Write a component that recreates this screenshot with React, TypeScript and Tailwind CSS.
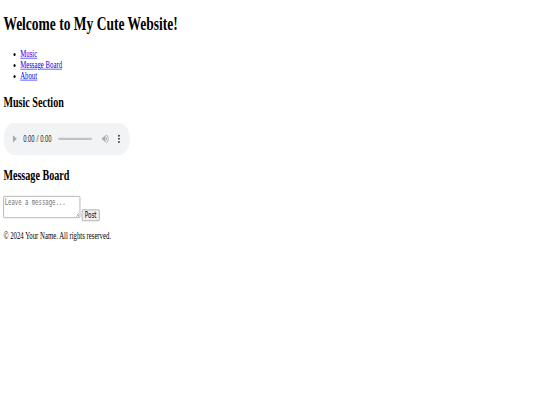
import React from "react";

export default function App() {
  return (
    <div className="w-[540px] h-[405px] overflow-hidden bg-white">
      <div className="w-[1280px] h-[665px] origin-top-left scale-x-[0.421875] scale-y-[0.609] px-[8px] pt-[21.44px] font-['Liberation_Serif',serif] text-[16px] leading-[normal] text-black">
        <header>
          <h1 className="text-[32px] font-bold mb-[21.44px]">Welcome to My Cute Website!</h1>
          <nav>
            <ul className="list-disc pl-[40px] my-[16px]">
              <li>
                <a href="#music" className="text-[#0000ee] underline">Music</a>
              </li>
              <li>
                <a href="#message-board" className="text-[#0000ee] underline">Message Board</a>
              </li>
              <li>
                <a href="#about" className="text-[#0000ee] underline">About</a>
              </li>
            </ul>
          </nav>
        </header>
        <section id="music">
          <h2 className="text-[24px] font-bold my-[19.92px]">Music Section</h2>
          <audio controls></audio>
        </section>
        <section id="message-board">
          <h2 className="text-[24px] font-bold my-[19.92px]">Message Board</h2>
          <div>
            <textarea
              rows={2}
              cols={20}
              placeholder="Leave a message..."
              className="font-['DejaVu_Sans_Mono',monospace] text-[13.333px] leading-[normal] border border-[#767676] rounded-[2px] p-[2px] placeholder:text-[#757575] resize"
            ></textarea>{" "}
            <button className="font-['DejaVu_Sans',sans-serif] text-[13.333px] leading-[normal] bg-[#efefef] border border-[#767676] rounded-[3px] px-[6px] py-[1px] text-black">
              Post
            </button>
          </div>
        </section>
        <footer>
          <p className="my-[16px]">© 2024 Your Name. All rights reserved.</p>
        </footer>
      </div>
    </div>
  );
}
